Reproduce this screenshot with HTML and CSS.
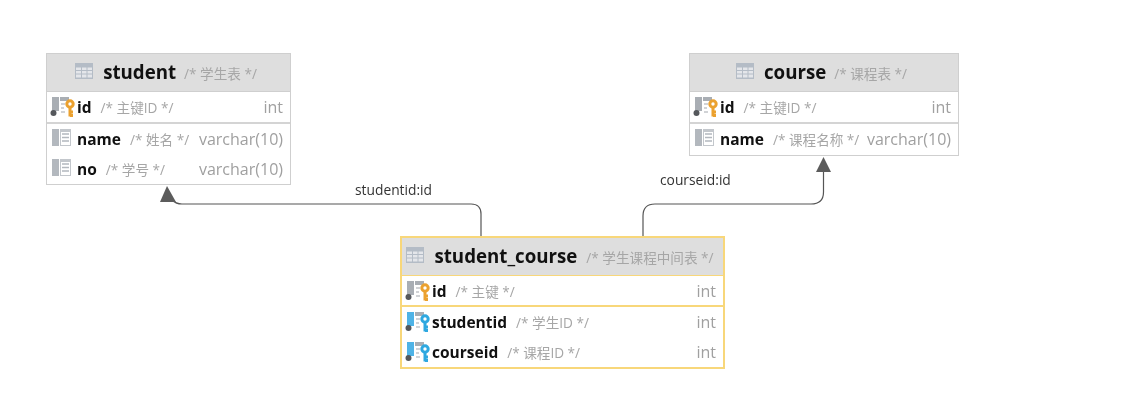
FILE: index.html
```html
<!DOCTYPE html>
<html lang="zh">
<head>
<meta charset="utf-8">
<title>ER diagram</title>
<link rel="stylesheet" href="styles.css">
</head>
<body>
<svg width="0" height="0" class="defs">
  <defs>
    <symbol id="tbl" viewBox="0 0 18 16">
      <rect x="0" y="0" width="18" height="16" fill="#b4bcc6"/>
      <rect x="1" y="4.500" width="5" height="2.500" fill="#e4e6ea"/><rect x="7" y="4.500" width="4.500" height="2.500" fill="#e4e6ea"/><rect x="12.500" y="4.500" width="4.500" height="2.500" fill="#e4e6ea"/>
      <rect x="1" y="8" width="5" height="2.500" fill="#e4e6ea"/><rect x="7" y="8" width="4.500" height="2.500" fill="#e4e6ea"/><rect x="12.500" y="8" width="4.500" height="2.500" fill="#e4e6ea"/>
      <rect x="1" y="11.500" width="5" height="3" fill="#e4e6ea"/><rect x="7" y="11.500" width="4.500" height="3" fill="#e4e6ea"/><rect x="12.500" y="11.500" width="4.500" height="3" fill="#e4e6ea"/>
    </symbol>
    <symbol id="col" viewBox="0 0 19 17">
      <rect x="0" y="0" width="7" height="17" fill="#b3b8be"/>
      <rect x="8" y="0" width="11" height="17" fill="#c3c7cc"/>
      <rect x="9" y="3" width="9" height="13" fill="#fff"/>
      <path d="M10 5h7M10 8.500h7M10 12h7" stroke="#b3b8be" stroke-width="1.500"/>
    </symbol>
    <symbol id="pk" viewBox="0 0 26 20">
      <rect x="2" y="0" width="7" height="14" fill="#a9aeb4"/>
      <rect x="10" y="0" width="9" height="4" fill="#a9aeb4"/>
      <path d="M11 7h4M11 11h3M11 15h4" stroke="#c2c5c9" stroke-width="1.500"/>
      <circle cx="3.500" cy="16" r="3" fill="#55585c"/>
      <circle cx="20" cy="7" r="3.200" fill="none" stroke="#eba12f" stroke-width="3"/>
      <path d="M20 10v9.500M20 15h3M20 18.500h3" stroke="#eba12f" stroke-width="3" fill="none"/>
    </symbol>
    <symbol id="fk" viewBox="0 0 26 20">
      <rect x="2" y="0" width="7" height="14" fill="#4fb3e6"/>
      <rect x="10" y="0" width="9" height="4" fill="#a9aeb4"/>
      <path d="M11 7h4M11 11h3M11 15h4" stroke="#c2c5c9" stroke-width="1.500"/>
      <circle cx="3.500" cy="16" r="3" fill="#55585c"/>
      <circle cx="20" cy="7" r="3.200" fill="none" stroke="#2ea8e0" stroke-width="3"/>
      <path d="M20 10v9.500M20 15h3M20 18.500h3" stroke="#2ea8e0" stroke-width="3" fill="none"/>
    </symbol>
  </defs>
</svg>

<main class="canvas">
  <svg class="edges" width="1138" height="404" viewBox="0 0 1138 404">
    <path d="M481 236V214Q481 204 471 204H182Q176 204 172 200" fill="none" stroke="#555" stroke-width="1.200"/>
    <path d="M167 186L176 202H160Z" fill="#5c5c5c"/>
    <path d="M643 236V216Q643 204 655 204H811Q823.500 204 823.500 192V168" fill="none" stroke="#555" stroke-width="1.200"/>
    <path d="M823.500 157L831 172H816Z" fill="#5c5c5c"/>
  </svg>

  <span class="edge-label label-student">studentid:id</span>
  <span class="edge-label label-course">courseid:id</span>

  <section class="table node-student">
    <header class="head">
      <svg class="tbl-icon"><use href="#tbl"/></svg>
      <b class="title">student</b><span class="note">/* 学生表 */</span>
    </header>
    <div class="group key-group">
      <div class="row"><svg class="key-icon"><use href="#pk"/></svg><b class="name">id</b><span class="note">/* 主键ID */</span><span class="type">int</span></div>
    </div>
    <div class="group">
      <div class="row"><svg class="col-icon"><use href="#col"/></svg><b class="name">name</b><span class="note">/* 姓名 */</span><span class="type">varchar(10)</span></div>
      <div class="row"><svg class="col-icon"><use href="#col"/></svg><b class="name">no</b><span class="note">/* 学号 */</span><span class="type">varchar(10)</span></div>
    </div>
  </section>

  <section class="table node-course">
    <header class="head">
      <svg class="tbl-icon"><use href="#tbl"/></svg>
      <b class="title">course</b><span class="note">/* 课程表 */</span>
    </header>
    <div class="group key-group">
      <div class="row"><svg class="key-icon"><use href="#pk"/></svg><b class="name">id</b><span class="note">/* 主键ID */</span><span class="type">int</span></div>
    </div>
    <div class="group">
      <div class="row"><svg class="col-icon"><use href="#col"/></svg><b class="name">name</b><span class="note">/* 课程名称 */</span><span class="type">varchar(10)</span></div>
    </div>
  </section>

  <section class="table selected node-link">
    <header class="head">
      <svg class="tbl-icon"><use href="#tbl"/></svg>
      <b class="title">student_course</b><span class="note">/* 学生课程中间表 */</span>
    </header>
    <div class="group key-group">
      <div class="row"><svg class="key-icon"><use href="#pk"/></svg><b class="name">id</b><span class="note">/* 主键 */</span><span class="type">int</span></div>
    </div>
    <div class="group">
      <div class="row"><svg class="key-icon"><use href="#fk"/></svg><b class="name">studentid</b><span class="note">/* 学生ID */</span><span class="type">int</span></div>
      <div class="row"><svg class="key-icon"><use href="#fk"/></svg><b class="name">courseid</b><span class="note">/* 课程ID */</span><span class="type">int</span></div>
    </div>
  </section>
</main>
</body>
</html>
```

FILE: styles.css
```css
html, body {
  margin: 0;
  padding: 0;
  background: #fff;
}

.defs {
  position: absolute;
}

.canvas {
  position: relative;
  width: 1138px;
  height: 404px;
  overflow: hidden;
  font-family: "Open Sans", "Noto Sans CJK SC", sans-serif;
  font-size: 14px;
  color: #000;
  filter: blur(0.35px);
}

.edges {
  position: absolute;
  left: 0;
  top: 0;
}

.edge-label {
  position: absolute;
  font-size: 13.800px;
  line-height: 18px;
  color: #333;
}

.label-student { left: 355px; top: 181px; }
.label-course { left: 660px; top: 171px; }

.table {
  position: absolute;
  box-sizing: border-box;
  display: flex;
  flex-direction: column;
  background: #fff;
  border: 1px solid #cfcfcf;
}

.node-student { left: 46px; top: 53px; width: 245px; height: 132px; }
.node-course { left: 689px; top: 53px; width: 270px; height: 103px; }
.node-link { left: 400px; top: 236px; width: 325px; height: 133px; }

.table.selected {
  border: 2px solid #f8d77a;
}

.head {
  height: 38px;
  flex: none;
  display: flex;
  align-items: center;
  justify-content: center;
  padding-right: 5px;
  background: #dedede;
  border-bottom: 1px solid #cfcfcf;
  box-sizing: border-box;
}

.selected .head {
  border-bottom-color: #f8d77a;
}

.tbl-icon {
  width: 18px;
  height: 16px;
  margin-right: 10px;
  margin-top: -3px;
}

.title {
  font-size: 18.700px;
  font-weight: 700;
  color: #111;
  margin-right: 8px;
  margin-top: -2px;
}

.selected .title {
  margin-right: 9px;
}

.note {
  font-size: 13.600px;
  color: #a6a6a6;
  white-space: nowrap;
}

.group {
  display: flex;
  flex-direction: column;
}

.key-group {
  border-bottom: 2px solid #d4d4d4;
}

.selected .key-group {
  border-bottom-color: #f8d77a;
}

.selected .key-group .row {
  height: 29px;
}

.row {
  height: 30px;
  display: flex;
  align-items: center;
  padding: 0 7px 0 5px;
}

.col-icon {
  width: 19px;
  height: 17px;
  margin-right: 6px;
  margin-top: -3px;
}

.key-icon {
  width: 26px;
  height: 20px;
  margin-left: -2px;
  margin-right: 1px;
}

.name {
  font-size: 15.500px;
  font-weight: 700;
  color: #111;
  margin-right: 9px;
}

.type {
  margin-left: auto;
  font-size: 16px;
  color: #a0a0a0;
}
```
